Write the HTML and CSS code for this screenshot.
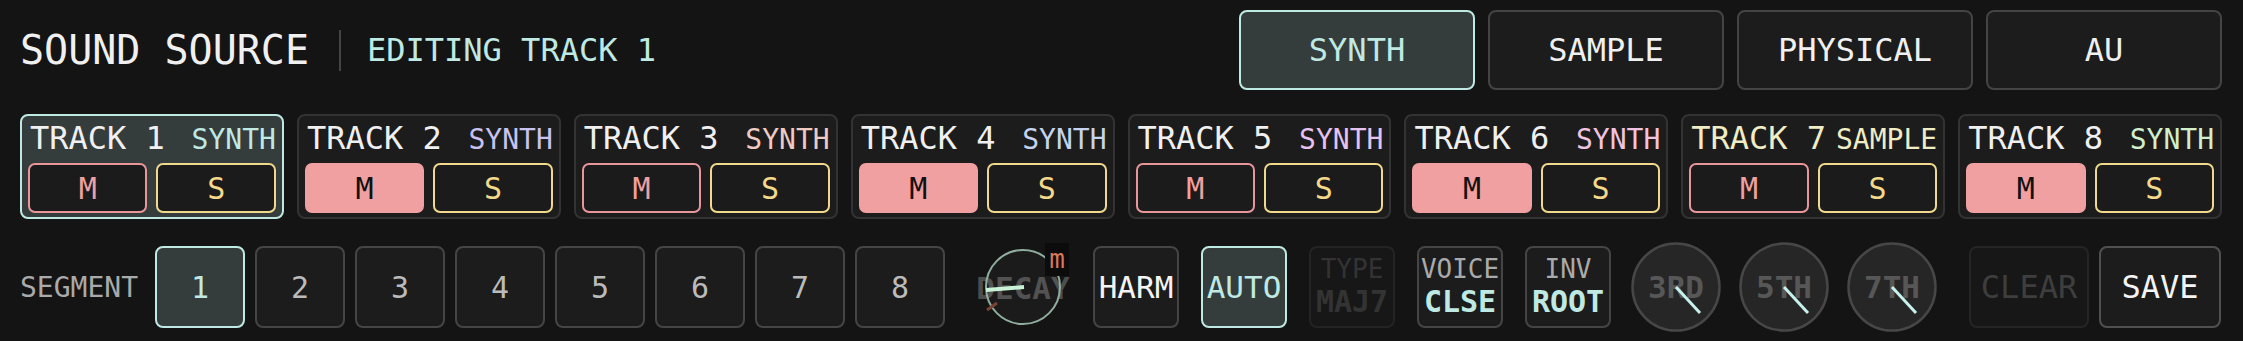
FILE: index.html
```html
<!DOCTYPE html>
<html lang="en">
<head>
  <meta charset="UTF-8" />
  <title>Sound Source</title>
  <link rel="stylesheet" href="styles.css">
</head>
<body>
<div class="app">

  <header class="top">
    <div class="heading">
      <h1>SOUND SOURCE</h1>
      <span class="sep"></span>
      <span class="editing">EDITING TRACK 1</span>
    </div>
    <div class="sources">
      <button class="src active">SYNTH</button>
      <button class="src">SAMPLE</button>
      <button class="src">PHYSICAL</button>
      <button class="src">AU</button>
    </div>
  </header>

  <section class="tracks">
    <div class="track active">
      <div class="track-head"><span class="name">TRACK 1</span><span class="kind k1">SYNTH</span></div>
      <div class="ms"><button class="m">M</button><button class="s">S</button></div>
    </div>
    <div class="track">
      <div class="track-head"><span class="name">TRACK 2</span><span class="kind k2">SYNTH</span></div>
      <div class="ms"><button class="m on">M</button><button class="s">S</button></div>
    </div>
    <div class="track">
      <div class="track-head"><span class="name">TRACK 3</span><span class="kind k3">SYNTH</span></div>
      <div class="ms"><button class="m">M</button><button class="s">S</button></div>
    </div>
    <div class="track">
      <div class="track-head"><span class="name">TRACK 4</span><span class="kind k4">SYNTH</span></div>
      <div class="ms"><button class="m on">M</button><button class="s">S</button></div>
    </div>
    <div class="track">
      <div class="track-head"><span class="name">TRACK 5</span><span class="kind k5">SYNTH</span></div>
      <div class="ms"><button class="m">M</button><button class="s">S</button></div>
    </div>
    <div class="track">
      <div class="track-head"><span class="name">TRACK 6</span><span class="kind k6">SYNTH</span></div>
      <div class="ms"><button class="m on">M</button><button class="s">S</button></div>
    </div>
    <div class="track">
      <div class="track-head"><span class="name k7">TRACK 7</span><span class="kind k7">SAMPLE</span></div>
      <div class="ms"><button class="m">M</button><button class="s">S</button></div>
    </div>
    <div class="track">
      <div class="track-head"><span class="name">TRACK 8</span><span class="kind k8">SYNTH</span></div>
      <div class="ms"><button class="m on">M</button><button class="s">S</button></div>
    </div>
  </section>

  <section class="controls">
    <span class="seg-label">SEGMENT</span>
    <div class="segs">
      <button class="seg active">1</button>
      <button class="seg">2</button>
      <button class="seg">3</button>
      <button class="seg">4</button>
      <button class="seg">5</button>
      <button class="seg">6</button>
      <button class="seg">7</button>
      <button class="seg">8</button>
    </div>

    <div class="decay">
      <span class="decay-label">DECAY</span>
      <svg class="decay-dial" viewBox="0 0 90 82" width="90" height="82">
        <circle cx="45" cy="41" r="37" fill="rgba(255,255,255,0.03)" stroke="#8fae9f" stroke-width="2" />
        <line x1="9" y1="64" x2="19" y2="57" stroke="#7a4333" stroke-width="3" />
        <line x1="46" y1="41" x2="8" y2="44" stroke="#c9f2d6" stroke-width="4" />
      </svg>
      <span class="mod">m</span>
    </div>

    <div class="tools">
      <button class="tool">HARM</button>
      <button class="tool active">AUTO</button>
      <button class="tool two off"><span class="sub">TYPE</span><span class="val">MAJ7</span></button>
      <button class="tool two"><span class="sub">VOICE</span><span class="val">CLSE</span></button>
      <button class="tool two"><span class="sub">INV</span><span class="val">ROOT</span></button>
    </div>

    <div class="dials">
      <svg class="dial" viewBox="0 0 90 92" width="90" height="92">
        <circle cx="45" cy="46" r="43.5" fill="#262626" stroke="#474747" stroke-width="2.5" />
        <text x="45" y="57" text-anchor="middle" class="dial-text">3RD</text>
        <line x1="45" y1="46" x2="69" y2="72" stroke="#c6f1ec" stroke-width="3" />
      </svg>
      <svg class="dial" viewBox="0 0 90 92" width="90" height="92">
        <circle cx="45" cy="46" r="43.5" fill="#262626" stroke="#474747" stroke-width="2.5" />
        <text x="45" y="57" text-anchor="middle" class="dial-text">5TH</text>
        <line x1="45" y1="46" x2="69" y2="72" stroke="#c6f1ec" stroke-width="3" />
      </svg>
      <svg class="dial" viewBox="0 0 90 92" width="90" height="92">
        <circle cx="45" cy="46" r="43.5" fill="#262626" stroke="#474747" stroke-width="2.5" />
        <text x="45" y="57" text-anchor="middle" class="dial-text">7TH</text>
        <line x1="45" y1="46" x2="69" y2="72" stroke="#c6f1ec" stroke-width="3" />
      </svg>
    </div>

    <button class="act clear" disabled>CLEAR</button>
    <button class="act save">SAVE</button>
  </section>

</div>
</body>
</html>
```

FILE: styles.css
```css
body {
  margin: 0;
  background: #141414;
  font-family: "DejaVu Sans Mono", "Liberation Mono", monospace;
  color: #eeeeee;
}
button {
  font-family: inherit;
  padding: 0;
  margin: 0;
  box-sizing: border-box;
  display: flex;
  align-items: center;
  justify-content: center;
  cursor: pointer;
}
.app {
  padding: 10px 21px 0 20px;
}

/* header */
.top {
  display: flex;
  justify-content: space-between;
  align-items: center;
  height: 80px;
}
.heading {
  display: flex;
  align-items: center;
}
h1 {
  margin: 0;
  font-size: 40px;
  font-weight: normal;
  color: #f0f0f0;
}
.sep {
  width: 2px;
  height: 41px;
  background: #444;
  margin: 0 26px 0 30px;
}
.editing {
  font-size: 32px;
  color: #bfe9e3;
}
.sources {
  display: flex;
  gap: 13px;
}
.src {
  width: 236px;
  height: 80px;
  border: 2px solid #444;
  border-radius: 8px;
  background: #1c1c1c;
  color: #f0f0f0;
  font-size: 32px;
}
.src.active {
  background: #353c3c;
  border-color: #bfe9e3;
  color: #bfe9e3;
}

/* tracks */
.tracks {
  display: grid;
  grid-template-columns: repeat(8, 1fr);
  gap: 13px;
  margin-top: 24px;
}
.track {
  height: 105px;
  box-sizing: border-box;
  border: 2px solid #333;
  border-radius: 8px;
  background: #1c1c1c;
  padding: 4px 6px;
  display: flex;
  flex-direction: column;
  justify-content: space-between;
}
.track.active {
  background: #353c3c;
  border-color: #bfe9e3;
}
.track-head {
  display: flex;
  justify-content: space-between;
  align-items: baseline;
  line-height: 36px;
  padding: 0 0 0 2px;
}
.name {
  font-size: 32px;
  color: #f0f0f0;
}
.kind {
  font-size: 28px;
}
.k1 { color: #bfe9e3; }
.k2 { color: #c9c2f0; }
.k3 { color: #f0cbc2; }
.k4 { color: #c4d4f0; }
.k5 { color: #e6c2ef; }
.k6 { color: #f0c4e0; }
.k7 { color: #f0ecc4; }
.k8 { color: #d2efcb; }
.ms {
  display: grid;
  grid-template-columns: 1fr 1fr;
  gap: 9px;
}
.ms button {
  height: 50px;
  border-radius: 7px;
  border: 2px solid;
  background: #1b1b1b;
  font-size: 30px;
}
.ms .m {
  border-color: #e8969a;
  color: #f0a0a0;
}
.ms .m.on {
  background: #f0a0a0;
  border-color: #f0a0a0;
  color: #111;
}
.ms .s {
  border-color: #f0d98c;
  color: #f5d98a;
}

/* bottom controls */
.controls {
  display: flex;
  align-items: center;
  height: 92px;
  margin-top: 22px;
}
.seg-label {
  font-size: 28px;
  color: #aaa;
  margin-right: 17px;
}
.segs {
  display: flex;
  gap: 10px;
}
.seg {
  width: 90px;
  height: 82px;
  border: 2px solid #454545;
  border-radius: 8px;
  background: #1c1c1c;
  color: #bbb;
  font-size: 30px;
}
.seg.active {
  background: #353c3c;
  border-color: #bfe9e3;
  color: #bfe9e3;
}

.decay {
  position: relative;
  width: 90px;
  height: 82px;
  margin-left: 33px;
  display: flex;
  align-items: center;
  justify-content: center;
}
.decay-label {
  font-size: 31px;
  line-height: 24px;
  margin-top: 2px;
  font-weight: bold;
  color: #4d4d4d;
}
.decay-dial {
  position: absolute;
  left: 0;
  top: 0;
}
.mod {
  position: absolute;
  right: -1px;
  top: -3px;
  width: 24px;
  height: 33px;
  background: #0c0c0c;
  color: #d9785a;
  font-size: 26px;
  line-height: 32px;
  text-align: center;
}

.tools {
  display: flex;
  gap: 22px;
  margin-left: 25px;
}
.tool {
  width: 86px;
  height: 82px;
  border: 2px solid #454545;
  border-radius: 8px;
  background: #1c1c1c;
  color: #f4f4f4;
  font-size: 31px;
}
.tool.active {
  background: #353c3c;
  border-color: #bfe9e3;
  color: #bfe9e3;
}
.tool.two {
  flex-direction: column;
}
.sub {
  font-size: 26px;
  line-height: 30px;
  color: #aaa;
}
.val {
  font-size: 30px;
  line-height: 36px;
  font-weight: bold;
  color: #bfe9e3;
}
.tool.off {
  background: #171717;
  border-color: #242424;
}
.tool.off .sub,
.tool.off .val {
  color: #333;
}

.dials {
  display: flex;
  gap: 18px;
  margin-left: 20px;
}
.dial-text {
  font-family: "DejaVu Sans Mono", monospace;
  font-size: 31px;
  font-weight: bold;
  fill: #575757;
}

.act {
  height: 82px;
  border: 2px solid #505050;
  border-radius: 8px;
  background: #1c1c1c;
  color: #f4f4f4;
  font-size: 32px;
}
.clear {
  width: 120px;
  margin-left: 32px;
  background: #171717;
  border-color: #252525;
  color: #3e3e3e;
  cursor: not-allowed;
}
.save {
  width: 122px;
  margin-left: 10px;
}
```
